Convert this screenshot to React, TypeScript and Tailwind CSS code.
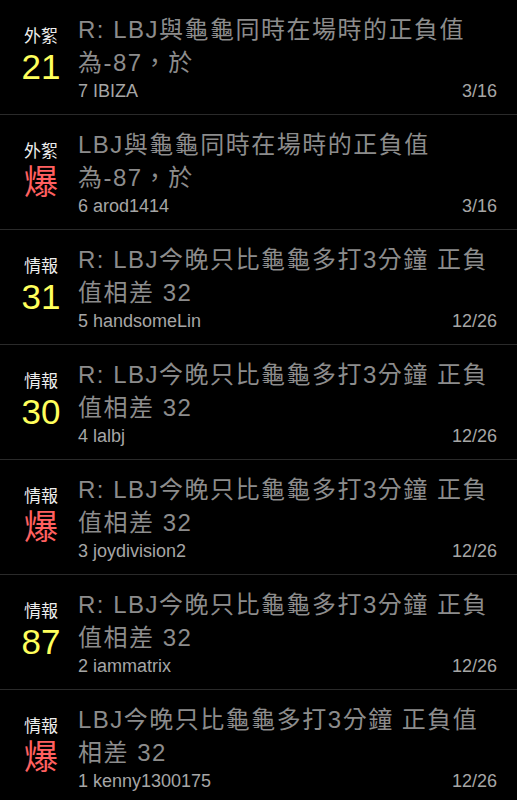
import React from "react";

type Row = {
  tag: string;
  num: string;
  title: [string, string];
  author: string;
  date: string;
};

const A1 = "R: LBJ今晚只比龜龜多打3分鐘 正負";
const A2 = "值相差 32";

const rows: Row[] = [
  { tag: "外絮", num: "21", title: ["R: LBJ與龜龜同時在場時的正負值", "為-87，於"], author: "7 IBIZA", date: "3/16" },
  { tag: "外絮", num: "爆", title: ["LBJ與龜龜同時在場時的正負值", "為-87，於"], author: "6 arod1414", date: "3/16" },
  { tag: "情報", num: "31", title: [A1, A2], author: "5 handsomeLin", date: "12/26" },
  { tag: "情報", num: "30", title: [A1, A2], author: "4 lalbj", date: "12/26" },
  { tag: "情報", num: "爆", title: [A1, A2], author: "3 joydivision2", date: "12/26" },
  { tag: "情報", num: "87", title: [A1, A2], author: "2 iammatrix", date: "12/26" },
  { tag: "情報", num: "爆", title: ["LBJ今晚只比龜龜多打3分鐘 正負值", "相差 32"], author: "1 kenny1300175", date: "12/26" },
];

const font = {
  fontFamily: '"Liberation Sans", "Noto Sans CJK TC", sans-serif',
};

export default function App() {
  return (
    <div className="min-h-[800px] w-full bg-black" style={font}>
      {rows.map((r, i) => {
        const boom = r.num === "爆";
        return (
          <div key={i} className="flex h-[115px] border-b border-[#2a2a2a]">
            <div className="ml-[8px] flex w-[66px] flex-none flex-col items-center pt-[27px]">
              <div className="text-[17px] leading-[20px] text-[#ededed]">{r.tag}</div>
              <div
                className={
                  boom
                    ? "mt-[2px] h-[36px] text-[34px] leading-[36px] text-[#ff6060]"
                    : "mt-[2px] h-[36px] text-[35px] leading-[36px] text-[#ffff5c]"
                }
              >
                {r.num}
              </div>
            </div>
            <div className="flex min-w-0 flex-1 flex-col pl-[4px] pr-[20px] pt-[13px]">
              <div className="whitespace-nowrap text-[24px] leading-[33px] tracking-[1.5px] text-[#8c8c8c]">
                <div>{r.title[0]}</div>
                <div>{r.title[1]}</div>
              </div>
              <div className="mt-[1px] flex items-baseline justify-between text-[18px] leading-[22px]">
                <span className="text-[#a6a6a6]">{r.author}</span>
                <span className="text-[#a6a6a6]">{r.date}</span>
              </div>
            </div>
          </div>
        );
      })}
    </div>
  );
}
